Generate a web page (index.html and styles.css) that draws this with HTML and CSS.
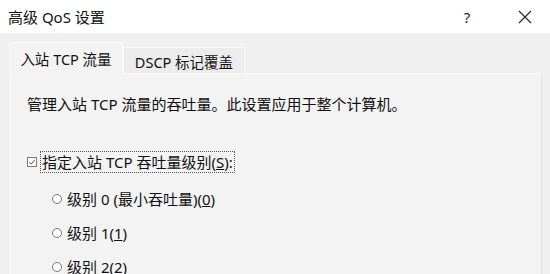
FILE: index.html
```html
<!DOCTYPE html>
<html lang="zh-CN">
<head>
    <meta charset="UTF-8">
    <title>高级 QoS 设置</title>
    <link rel="stylesheet" href="styles.css">
</head>
<body>
    <div class="titlebar">
        <span class="title">高级 QoS 设置</span>
        <div class="caption-btns">
            <span class="cap-btn">?</span>
            <span class="cap-btn">
                <svg width="14" height="14" viewBox="0 0 14 14"><path d="M1 1 L13 13 M13 1 L1 13" stroke="#222" stroke-width="1.1" fill="none"/></svg>
            </span>
        </div>
    </div>

    <div class="tabs">
        <div class="tab active">入站 TCP 流量</div>
        <div class="tab">DSCP 标记覆盖</div>
    </div>

    <div class="panel">
        <p class="desc">管理入站 TCP 流量的吞吐量。此设置应用于整个计算机。</p>

        <div class="check-row">
            <svg class="check" width="10" height="10" viewBox="0 0 10 10">
                <rect x="0.5" y="0.5" width="9" height="9" fill="#fff" stroke="#7a7a7a"/>
                <path d="M2.2 5.2 L4.2 7.2 L7.8 2.8" stroke="#555" stroke-width="1" fill="none"/>
            </svg>
            <span class="focus-label">指定入站 TCP 吞吐量级别(<u>S</u>):</span>
        </div>

        <div class="radios">
            <div class="radio-row"><span class="radio"></span>级别 0 (最小吞吐量)(<u>0</u>)</div>
            <div class="radio-row"><span class="radio"></span>级别 1(<u>1</u>)</div>
            <div class="radio-row"><span class="radio"></span>级别 2(<u>2</u>)</div>
        </div>
    </div>
</body>
</html>
```

FILE: styles.css
```css
* {
    margin: 0;
    padding: 0;
    box-sizing: border-box;
}

body {
    font-family: "Noto Sans", "Noto Sans CJK SC", sans-serif;
    background: #f0f0f0;
    color: #111;
    width: 550px;
    height: 274px;
    overflow: hidden;
}

.titlebar {
    height: 33px;
    background: #fff;
    display: flex;
    align-items: center;
    justify-content: space-between;
    padding-left: 8px;
}

.title {
    font-size: 15px;
    color: #111;
}

.caption-btns {
    display: flex;
    gap: 12px;
    padding-right: 2px;
}

.cap-btn {
    width: 46px;
    height: 33px;
    display: flex;
    align-items: center;
    justify-content: center;
    font-size: 15px;
    color: #222;
}

.tabs {
    display: flex;
    align-items: flex-end;
    padding: 9px 0 0 9px;
    position: relative;
    z-index: 1;
}

.tab {
    font-size: 14.5px;
    display: flex;
    align-items: center;
    justify-content: center;
}

.tab.active {
    width: 114px;
    height: 32px;
    background: #f3f3f3;
    border: 1px solid #fbfbfb;
    border-bottom: none;
    margin-bottom: -1px;
}

.tab:not(.active) {
    width: 122px;
    height: 26px;
    background: #ececec;
    border: 1px solid #f8f8f8;
    border-bottom: none;
    padding-top: 2px;
}

.panel {
    margin: 0 8px 0 10px;
    height: 220px;
    background: #f3f3f3;
    border: 1px solid #fbfbfb;
    border-right-color: #e2e2e2;
    padding: 18px 0 0 16px;
    font-size: 15px;
}

.desc {
    line-height: 24px;
}

.check-row {
    display: flex;
    align-items: center;
    margin-top: 35px;
}

.check {
    margin-right: 3px;
}

.focus-label {
    border: 1px dotted #555;
    padding: 0 1px;
    line-height: 20px;
}

.radios {
    padding: 14px 0 0 25px;
    display: flex;
    flex-direction: column;
    gap: 10px;
}

.radio-row {
    display: flex;
    align-items: center;
    line-height: 24px;
}

.radio {
    width: 10px;
    height: 10px;
    border: 1px solid #777;
    border-radius: 50%;
    background: #fff;
    margin-right: 5px;
}
```
